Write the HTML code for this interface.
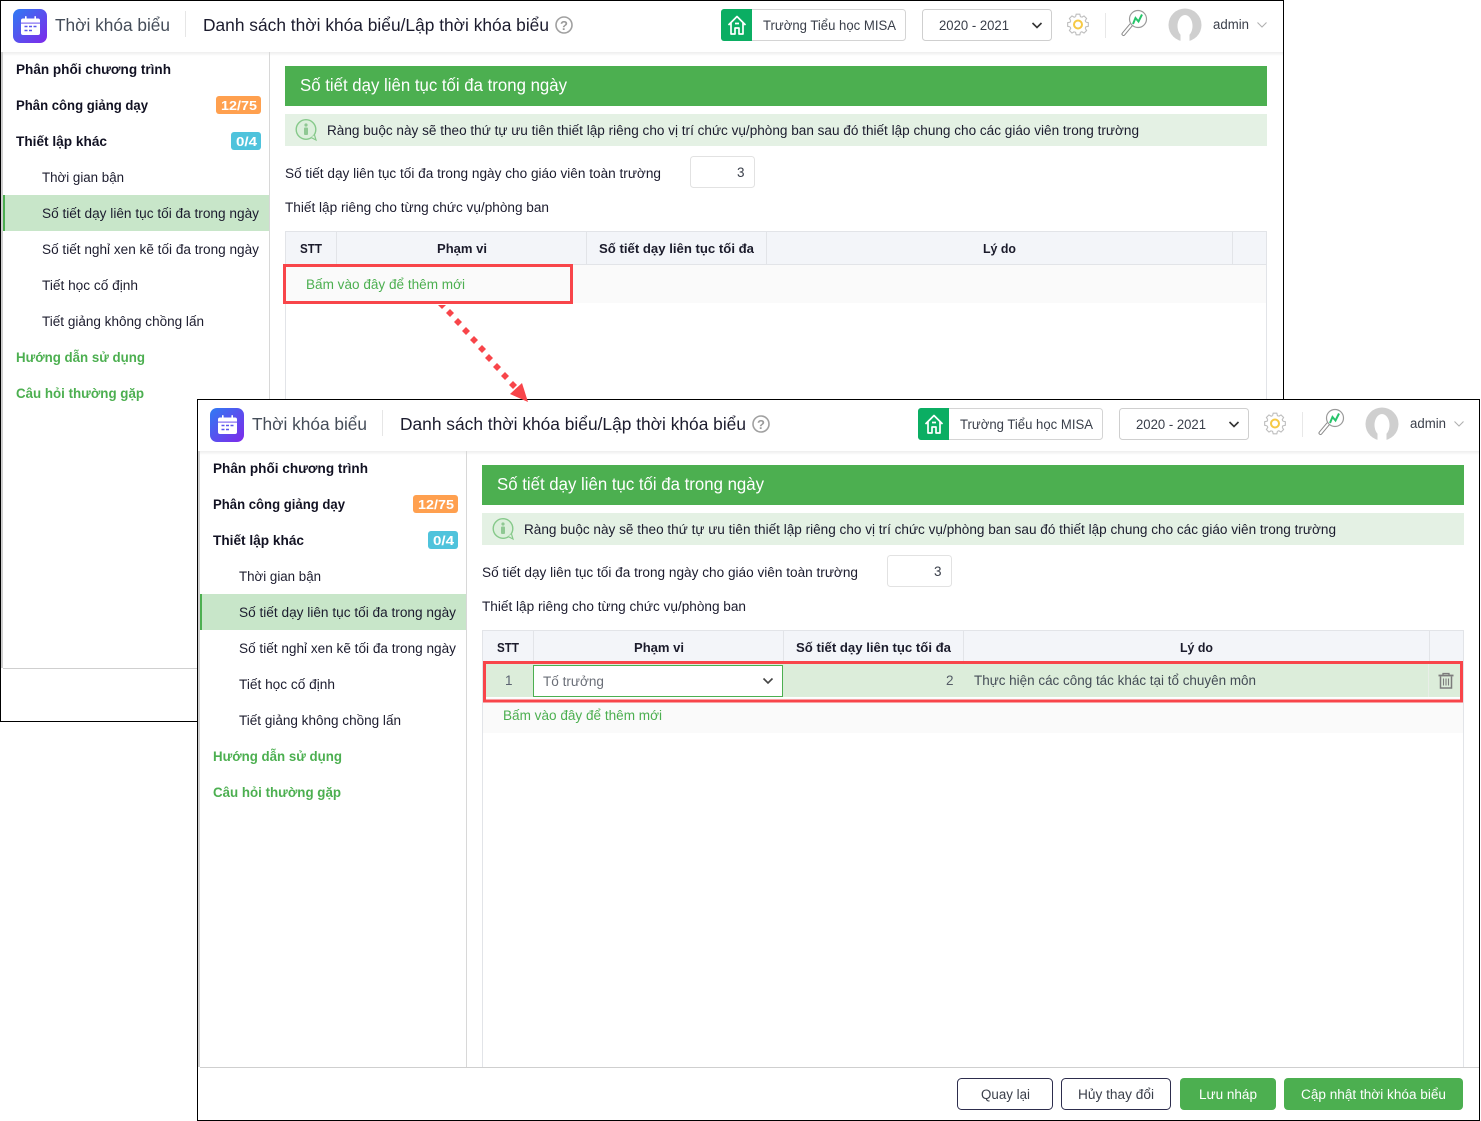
<!DOCTYPE html>
<html lang="vi">
<head>
<meta charset="utf-8">
<title>Thời khóa biểu</title>
<style>
html,body{margin:0;padding:0;background:#fff;width:1481px;height:1121px;overflow:hidden}
svg{display:block}
text{font-family:"Liberation Sans","DejaVu Sans",sans-serif;font-size:13.5px;fill:#1c1c2e}
.t17{font-size:17.5px}
.title{font-size:17.5px;fill:#454d59}
.b{font-weight:bold;font-size:13.5px;fill:#111122}
.g{font-weight:bold;fill:#4caf50}
.a{fill:#4caf50}
.w{fill:#fff}
.wb{fill:#fff;font-weight:bold;font-size:13px}
.m{fill:#3a3f4a}
.h{font-weight:bold;font-size:13px;fill:#1b1b2b}
</style>
</head>
<body>
<svg xmlns="http://www.w3.org/2000/svg" width="1481" height="1121" viewBox="0 0 1481 1121">
<defs>
<linearGradient id="lg" x1="0" y1="0" x2="1" y2="1"><stop offset="0" stop-color="#2f7bf3"/><stop offset="1" stop-color="#7f28ea"/></linearGradient>
<linearGradient id="sh" x1="0" y1="0" x2="0" y2="1"><stop offset="0" stop-color="#000" stop-opacity=".07"/><stop offset="1" stop-color="#000" stop-opacity="0"/></linearGradient>
<path id="tooth" d="M7.84-2.4L10.34-1.82V1.82L7.84 2.4L7.24 3.85" fill="none" stroke="#bdbdbd" stroke-width="1.1"/>
<g id="gear">
<use href="#tooth"/><use href="#tooth" transform="rotate(45)"/><use href="#tooth" transform="rotate(90)"/><use href="#tooth" transform="rotate(135)"/><use href="#tooth" transform="rotate(180)"/><use href="#tooth" transform="rotate(225)"/><use href="#tooth" transform="rotate(270)"/><use href="#tooth" transform="rotate(315)"/>
<circle r="4" fill="none" stroke="#f6c945" stroke-width="2"/>
</g>
<g id="chrome">
<!-- header -->
<rect x="1" y="1" width="1282" height="51" fill="#fff"/>
<rect x="1" y="52" width="1282" height="4" fill="url(#sh)"/>
<rect x="13" y="9" width="34" height="34" rx="7" fill="url(#lg)"/>
<rect x="21" y="18.5" width="19" height="16.5" rx="2" fill="#fff"/>
<rect x="25" y="16" width="1.6" height="4.5" rx=".8" fill="#fff"/>
<rect x="34.4" y="16" width="1.6" height="4.5" rx=".8" fill="#fff"/>
<rect x="21" y="22.6" width="19" height="1" fill="#6a50ee"/>
<path d="M24.5 26.5h3M29 26.5h3M33.5 26.5h3M24.5 30.5h3M29 30.5h3" stroke="#5a55ee" stroke-width="1.6"/>
<rect x="185" y="11" width="1" height="26" fill="#e6e6e6"/>
<circle cx="564" cy="25" r="8" fill="none" stroke="#a0a0a0" stroke-width="1.6"/>
<!-- school -->
<rect x="721.5" y="9.5" width="184" height="31" rx="3" fill="#fff" stroke="#d4d4d4"/>
<path d="M724 9h28v32h-28a3 3 0 0 1-3-3V12a3 3 0 0 1 3-3z" fill="#0bae63"/>
<path d="M728.5 25L737 16.500L745.500 25M731 22.500V34H735V28H739V34H743V22.500M735 23.500H739" fill="none" stroke="#fff" stroke-width="1.7" stroke-linejoin="round"/>
<!-- year -->
<rect x="922.500" y="9.500" width="129" height="31" rx="3" fill="#fff" stroke="#cfcfcf"/>
<path d="M1032.500 23l4.500 4.500l4.500-4.500" fill="none" stroke="#333" stroke-width="1.600"/>
<use href="#gear" x="1078" y="24.500"/>
<rect x="1105" y="13" width="1" height="25" fill="#e8e8e8"/>
<!-- magnifier -->
<line x1="1131" y1="25" x2="1123.500" y2="34" stroke="#8c8c8c" stroke-width="4" stroke-linecap="round"/>
<line x1="1131" y1="25" x2="1123.500" y2="34" stroke="#fff" stroke-width="2" stroke-linecap="round"/>
<circle cx="1138" cy="19" r="8.500" fill="#fff" stroke="#9a9a9a" stroke-width="1.200"/>
<path d="M1133 24l2.500-6l3 3.500l3.500-7" fill="none" stroke="#27c46b" stroke-width="2"/>
<!-- avatar -->
<circle cx="1185" cy="25" r="16.500" fill="#cfcfcf"/>
<ellipse cx="1185" cy="26" rx="7.500" ry="11" fill="#fff"/>
<rect x="1180.500" y="32" width="9" height="10" fill="#fff"/>
<path d="M1257.500 22.500l4.500 4.500l4.500-4.500" fill="none" stroke="#b0b0b0" stroke-width="1.100"/>
<!-- sidebar -->
<rect x="1" y="52" width="2" height="616" fill="#cfcfcf"/>
<rect x="269" y="52" width="1" height="616" fill="#d8d8d8"/>
<rect x="3" y="668" width="1280" height="1" fill="#cfcfcf"/>
<rect x="3" y="195" width="266" height="36" fill="#c8e6c9"/>
<rect x="3" y="195" width="2" height="36" fill="#4caf50"/>
<rect x="216" y="96" width="45" height="18" rx="3" fill="#ffa04f"/>
<rect x="231" y="132" width="30" height="18" rx="3" fill="#4fc3dc"/>
<!-- main -->
<rect x="285" y="66" width="982" height="40" fill="#4caf50"/>
<rect x="285" y="114" width="982" height="32" fill="#e4f1e4"/>
<circle cx="306" cy="129.500" r="9.800" fill="#dcefdc" stroke="#86c98a" stroke-width="1.400"/>
<path d="M311 137.500l5 2.500l-1.500-5" fill="#dcefdc" stroke="#86c98a" stroke-width="1.200"/>
<circle cx="306" cy="125" r="1.600" fill="#8fc893"/>
<rect x="304" y="127.500" width="4" height="7.500" rx="1" fill="#8fc893"/>
<rect x="690.500" y="156.500" width="64" height="31" rx="3" fill="#fff" stroke="#e2e2e2"/>
<!-- table -->
<rect x="285" y="231" width="982" height="33" fill="#f3f5f9"/>
<path d="M285.500 231V668M1266.500 231V668M285 231.500H1267M285 264.500H1267M336.500 231V264M586.500 231V264M766.500 231V264M1232.500 231V264" fill="none" stroke="#e2e4e8"/>
</g>
<g id="trash" fill="none" stroke="#7c7c7c">
<path d="M-7.500-5.500H7.500" stroke-width="1.800"/>
<path d="M-3-5.500V-7.500H3V-5.500" stroke-width="1.300"/>
<path d="M-5.500-4.500V7H5.500V-4.500" stroke-width="1.500"/>
<path d="M-2.500-2.500V4.500M0-2.500V4.500M2.500-2.500V4.500" stroke-width="1.100"/>
</g>
</defs>

<!-- TOP PANEL -->
<rect x="0.500" y="0.500" width="1283" height="721" fill="#fff" stroke="#000"/>
<use href="#chrome"/>
<rect x="285" y="265" width="981" height="38" fill="#fafafa"/>
<text class="title" x="55" y="31" textLength="115" lengthAdjust="spacingAndGlyphs">Thời khóa biểu</text>
<text class="t17" x="203" y="31" textLength="346" lengthAdjust="spacingAndGlyphs">Danh sách thời khóa biểu/Lập thời khóa biểu</text>
<text x="560" y="30" style="font-size:13px;font-weight:bold;fill:#9a9a9a">?</text>
<text class="m" x="763" y="30" textLength="133" lengthAdjust="spacingAndGlyphs">Trường Tiểu học MISA</text>
<text class="m" x="939" y="30" textLength="70" lengthAdjust="spacingAndGlyphs">2020 - 2021</text>
<text class="m" x="1213" y="29" textLength="36" lengthAdjust="spacingAndGlyphs">admin</text>
<text class="b" x="16" y="74" textLength="155" lengthAdjust="spacingAndGlyphs">Phân phối chương trình</text>
<text class="b" x="16" y="110" textLength="132" lengthAdjust="spacingAndGlyphs">Phân công giảng dạy</text>
<text class="wb" x="221" y="110" textLength="36" lengthAdjust="spacingAndGlyphs">12/75</text>
<text class="b" x="16" y="146" textLength="91" lengthAdjust="spacingAndGlyphs">Thiết lập khác</text>
<text class="wb" x="236" y="146" textLength="21" lengthAdjust="spacingAndGlyphs">0/4</text>
<text x="42" y="182" textLength="82" lengthAdjust="spacingAndGlyphs">Thời gian bận</text>
<text x="42" y="218" textLength="217" lengthAdjust="spacingAndGlyphs">Số tiết dạy liên tục tối đa trong ngày</text>
<text x="42" y="254" textLength="217" lengthAdjust="spacingAndGlyphs">Số tiết nghỉ xen kẽ tối đa trong ngày</text>
<text x="42" y="290" textLength="96" lengthAdjust="spacingAndGlyphs">Tiết học cố định</text>
<text x="42" y="326" textLength="162" lengthAdjust="spacingAndGlyphs">Tiết giảng không chồng lấn</text>
<text class="g" x="16" y="362" textLength="129" lengthAdjust="spacingAndGlyphs">Hướng dẫn sử dụng</text>
<text class="g" x="16" y="398" textLength="128" lengthAdjust="spacingAndGlyphs">Câu hỏi thường gặp</text>
<text class="t17 w" x="300" y="91" textLength="267" lengthAdjust="spacingAndGlyphs">Số tiết dạy liên tục tối đa trong ngày</text>
<text x="327" y="135" textLength="812" lengthAdjust="spacingAndGlyphs">Ràng buộc này sẽ theo thứ tự ưu tiên thiết lập riêng cho vị trí chức vụ/phòng ban sau đó thiết lập chung cho các giáo viên trong trường</text>
<text x="285" y="178" textLength="376" lengthAdjust="spacingAndGlyphs">Số tiết dạy liên tục tối đa trong ngày cho giáo viên toàn trường</text>
<text class="m" x="737" y="177">3</text>
<text x="285" y="212" textLength="264" lengthAdjust="spacingAndGlyphs">Thiết lập riêng cho từng chức vụ/phòng ban</text>
<text class="h" x="300" y="253" textLength="22" lengthAdjust="spacingAndGlyphs">STT</text>
<text class="h" x="437" y="253" textLength="50" lengthAdjust="spacingAndGlyphs">Phạm vi</text>
<text class="h" x="599" y="253" textLength="155" lengthAdjust="spacingAndGlyphs">Số tiết dạy liên tục tối đa</text>
<text class="h" x="983" y="253" textLength="33" lengthAdjust="spacingAndGlyphs">Lý do</text>
<text class="a" x="306" y="289" textLength="159" lengthAdjust="spacingAndGlyphs">Bấm vào đây để thêm mới</text>
<rect x="284.500" y="265.500" width="287" height="37" fill="none" stroke="#f8454a" stroke-width="3"/>

<!-- BOTTOM PANEL -->
<rect x="197.500" y="399.500" width="1282" height="721" fill="#fff" stroke="#000"/>
<g transform="translate(197 399)"><svg x="0" y="0" width="1282" height="721" overflow="hidden"><use href="#chrome"/></svg></g>
<rect x="483" y="664" width="980" height="69" fill="#fff"/>
<rect x="483" y="664" width="980" height="33" fill="#dcedda"/>
<rect x="483" y="698" width="980" height="35" fill="#fafafa"/>
<rect x="1428" y="664" width="1" height="33" fill="#e9eee8"/>
<rect x="533.500" y="665.500" width="249" height="31" fill="#fff" stroke="#4caf50"/>
<path d="M763.500 678.500l4.500 4.500l4.500-4.500" fill="none" stroke="#444" stroke-width="1.600"/>
<use href="#trash" x="1446" y="681"/>
<rect x="484.500" y="662.500" width="977" height="38.500" fill="none" stroke="#f8454a" stroke-width="3"/>
<text class="title" x="252" y="430" textLength="115" lengthAdjust="spacingAndGlyphs">Thời khóa biểu</text>
<text class="t17" x="400" y="430" textLength="346" lengthAdjust="spacingAndGlyphs">Danh sách thời khóa biểu/Lập thời khóa biểu</text>
<text x="757" y="429" style="font-size:13px;font-weight:bold;fill:#9a9a9a">?</text>
<text class="m" x="960" y="429" textLength="133" lengthAdjust="spacingAndGlyphs">Trường Tiểu học MISA</text>
<text class="m" x="1136" y="429" textLength="70" lengthAdjust="spacingAndGlyphs">2020 - 2021</text>
<text class="m" x="1410" y="428" textLength="36" lengthAdjust="spacingAndGlyphs">admin</text>
<text class="b" x="213" y="473" textLength="155" lengthAdjust="spacingAndGlyphs">Phân phối chương trình</text>
<text class="b" x="213" y="509" textLength="132" lengthAdjust="spacingAndGlyphs">Phân công giảng dạy</text>
<text class="wb" x="418" y="509" textLength="36" lengthAdjust="spacingAndGlyphs">12/75</text>
<text class="b" x="213" y="545" textLength="91" lengthAdjust="spacingAndGlyphs">Thiết lập khác</text>
<text class="wb" x="433" y="545" textLength="21" lengthAdjust="spacingAndGlyphs">0/4</text>
<text x="239" y="581" textLength="82" lengthAdjust="spacingAndGlyphs">Thời gian bận</text>
<text x="239" y="617" textLength="217" lengthAdjust="spacingAndGlyphs">Số tiết dạy liên tục tối đa trong ngày</text>
<text x="239" y="653" textLength="217" lengthAdjust="spacingAndGlyphs">Số tiết nghỉ xen kẽ tối đa trong ngày</text>
<text x="239" y="689" textLength="96" lengthAdjust="spacingAndGlyphs">Tiết học cố định</text>
<text x="239" y="725" textLength="162" lengthAdjust="spacingAndGlyphs">Tiết giảng không chồng lấn</text>
<text class="g" x="213" y="761" textLength="129" lengthAdjust="spacingAndGlyphs">Hướng dẫn sử dụng</text>
<text class="g" x="213" y="797" textLength="128" lengthAdjust="spacingAndGlyphs">Câu hỏi thường gặp</text>
<text class="t17 w" x="497" y="490" textLength="267" lengthAdjust="spacingAndGlyphs">Số tiết dạy liên tục tối đa trong ngày</text>
<text x="524" y="534" textLength="812" lengthAdjust="spacingAndGlyphs">Ràng buộc này sẽ theo thứ tự ưu tiên thiết lập riêng cho vị trí chức vụ/phòng ban sau đó thiết lập chung cho các giáo viên trong trường</text>
<text x="482" y="577" textLength="376" lengthAdjust="spacingAndGlyphs">Số tiết dạy liên tục tối đa trong ngày cho giáo viên toàn trường</text>
<text class="m" x="934" y="576">3</text>
<text x="482" y="611" textLength="264" lengthAdjust="spacingAndGlyphs">Thiết lập riêng cho từng chức vụ/phòng ban</text>
<text class="h" x="497" y="652" textLength="22" lengthAdjust="spacingAndGlyphs">STT</text>
<text class="h" x="634" y="652" textLength="50" lengthAdjust="spacingAndGlyphs">Phạm vi</text>
<text class="h" x="796" y="652" textLength="155" lengthAdjust="spacingAndGlyphs">Số tiết dạy liên tục tối đa</text>
<text class="h" x="1180" y="652" textLength="33" lengthAdjust="spacingAndGlyphs">Lý do</text>
<text x="505" y="685" style="fill:#5a6270">1</text>
<text x="543" y="686" style="fill:#6b6f78" textLength="61" lengthAdjust="spacingAndGlyphs">Tố trưởng</text>
<text x="946" y="685" style="fill:#555c66">2</text>
<text x="974" y="685" style="fill:#444c56" textLength="282" lengthAdjust="spacingAndGlyphs">Thực hiện các công tác khác tại tổ chuyên môn</text>
<text class="a" x="503" y="720" textLength="159" lengthAdjust="spacingAndGlyphs">Bấm vào đây để thêm mới</text>

<!-- footer buttons -->
<rect x="957.500" y="1078.500" width="95" height="31" rx="4" fill="#fff" stroke="#2d2d4d"/>
<rect x="1061.500" y="1078.500" width="109" height="31" rx="4" fill="#fff" stroke="#2d2d4d"/>
<rect x="1180" y="1078" width="96" height="32" rx="4" fill="#4caf50"/>
<rect x="1284" y="1078" width="179" height="32" rx="4" fill="#4caf50"/>
<text class="m" x="981" y="1099" textLength="49" lengthAdjust="spacingAndGlyphs">Quay lại</text>
<text class="m" x="1078" y="1099" textLength="76" lengthAdjust="spacingAndGlyphs">Hủy thay đổi</text>
<text class="w" x="1199" y="1099" textLength="58" lengthAdjust="spacingAndGlyphs">Lưu nháp</text>
<text class="w" x="1301" y="1099" textLength="145" lengthAdjust="spacingAndGlyphs">Cập nhật thời khóa biểu</text>

<!-- arrow -->
<g fill="#f8454a">
<polygon points="438,305 446,305 442,309"/>
<polygon points="450,309 454,313 450,317 446,313"/>
<polygon points="458,318 462,322 458,326 454,322"/>
<polygon points="466,327 470,331 466,335 462,331"/>
<polygon points="474,336 478,340 474,344 470,340"/>
<polygon points="482,345 486,349 482,353 478,349"/>
<polygon points="489,354 493,358 489,362 485,358"/>
<polygon points="497,363 501,367 497,371 493,367"/>
<polygon points="505,372 509,376 505,380 501,376"/>
<polygon points="513,381 517,385 513,389 509,385"/>
<polygon points="510,394 522,383 528,402"/>
</g>
</svg>
</body>
</html>
